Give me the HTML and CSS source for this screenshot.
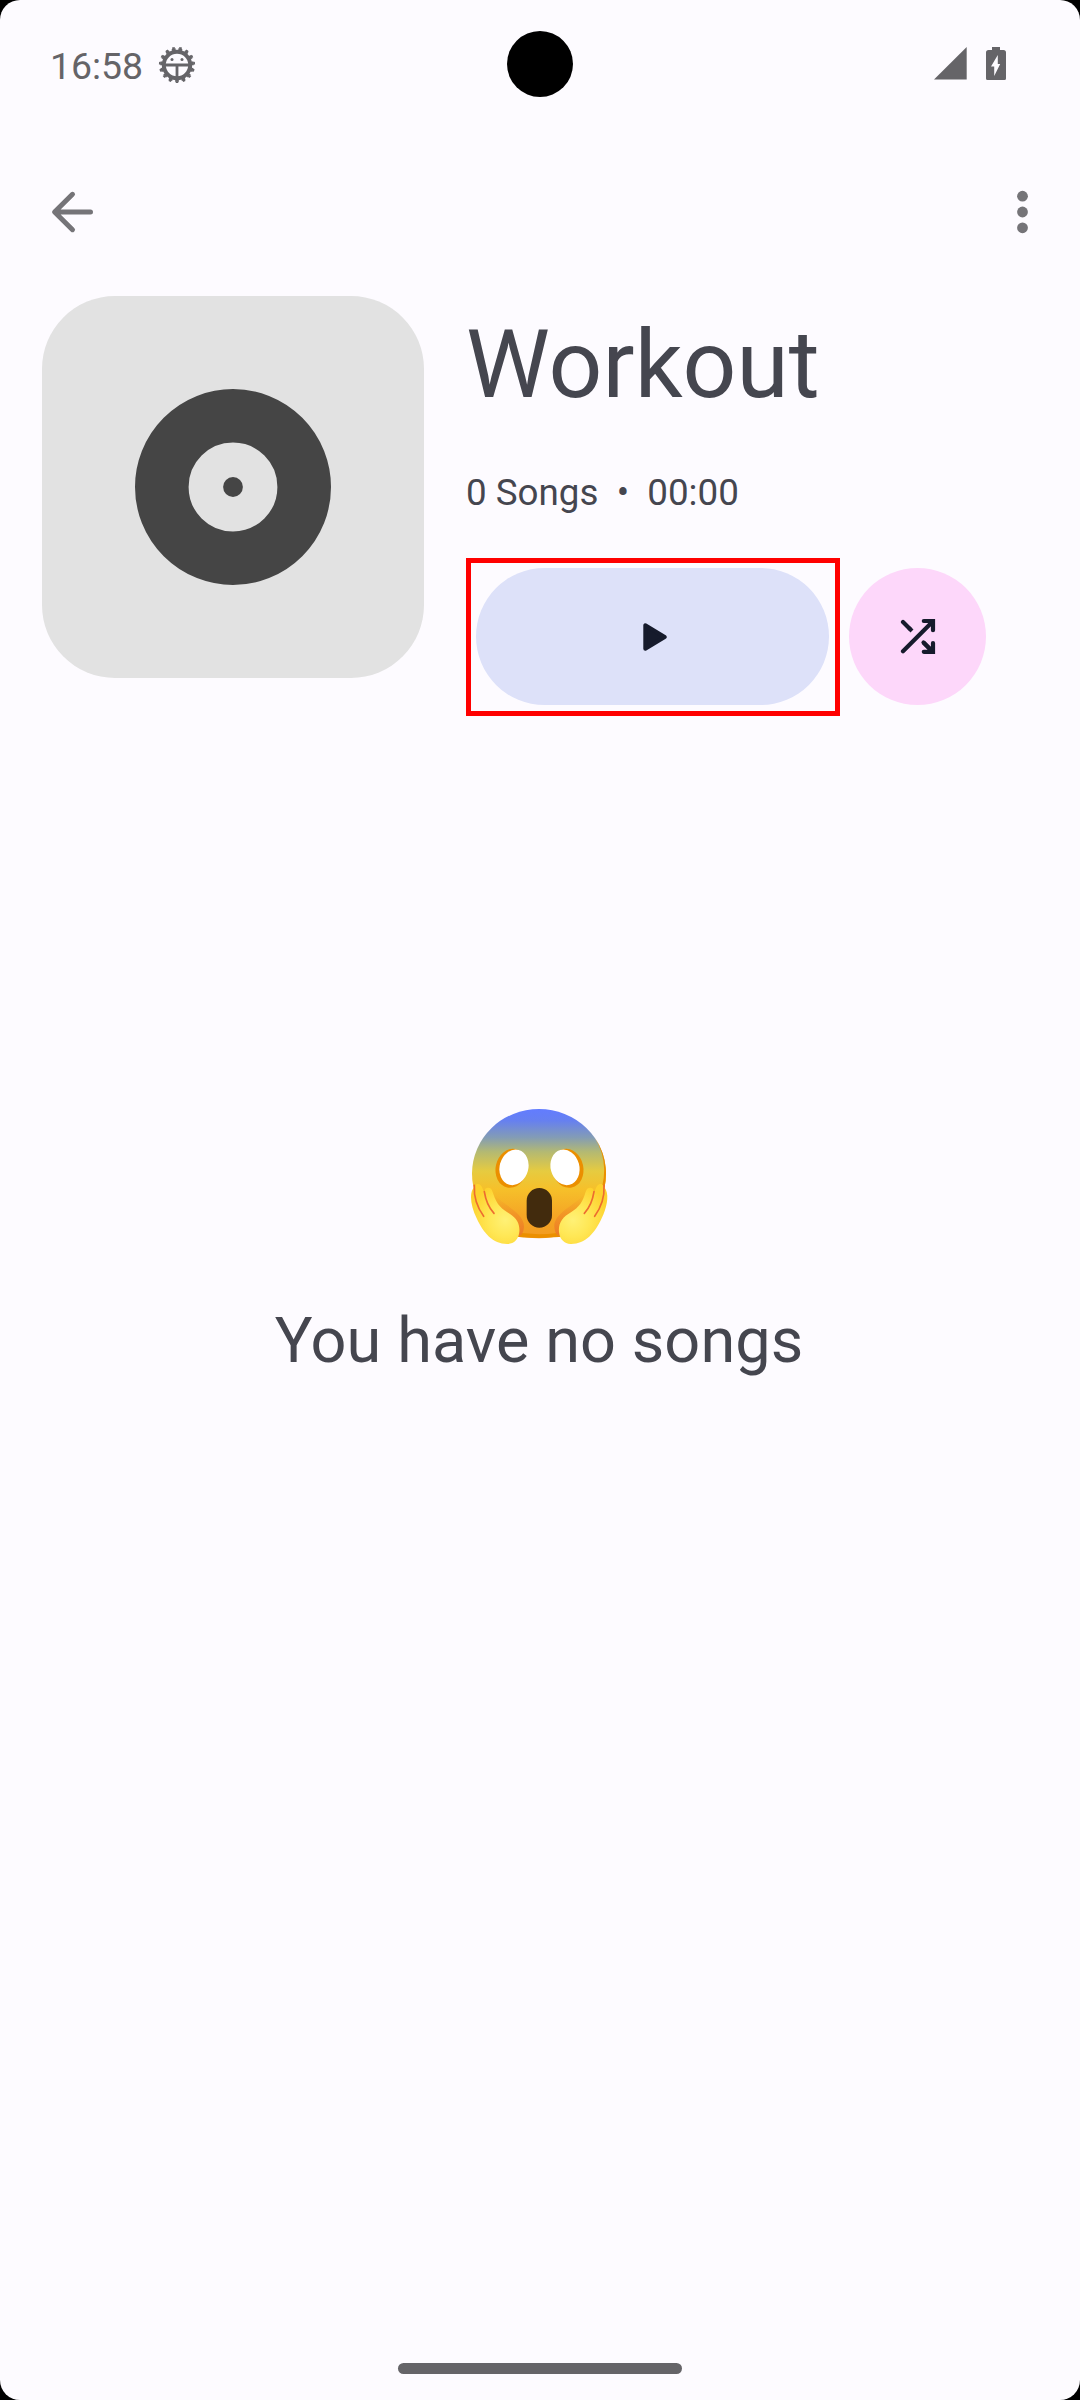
FILE: index.html
```html
<!DOCTYPE html>
<html lang="en">
<head>
<meta charset="utf-8">
<title>Workout</title>
<link rel="stylesheet" href="styles.css">
</head>
<body>
<div class="screen">
  <div class="camera"></div>
  <header class="status">
    <span class="clock">16:58</span>
    <svg class="debug" width="38" height="38" viewBox="-19 -19 38 38">
      <g fill="none" stroke="currentColor">
        <circle r="13.200" stroke-width="4"/>
        <circle r="15.700" stroke-width="2.200" pathLength="15" stroke-dasharray=".58 .42" stroke-dashoffset="-.46"/>
        <circle r="17.200" stroke-width="1.800" pathLength="15" stroke-dasharray=".36 .64" stroke-dashoffset="-.57"/>
        <path d="M-12 0H12M0 0V13" stroke-width="2.800"/>
      </g>
      <circle cx="-5" cy="-5.600" r="1.500" fill="currentColor"/>
      <circle cx="5" cy="-5.600" r="1.500" fill="currentColor"/>
    </svg>
    <svg class="signal" width="33" height="33" viewBox="0 0 33 33"><path d="M0 32.5L32.7 0V32.5z" fill="currentColor"/></svg>
    <svg class="battery" width="20" height="33" viewBox="0 0 20 33">
      <path fill="currentColor" fill-rule="evenodd" d="M6 0H14V3H17.500Q20 3 20 5.500V31.500Q20 33 18.500 33H1.500Q0 33 0 31.500V5.500Q0 3 2.500 3H6zM11.800 8L5 19.600H8.200V29L14.200 17H11.800z"/>
    </svg>
  </header>
  <nav class="toolbar">
    <svg width="44" height="44" viewBox="0 0 44 44" fill="none" stroke="currentColor" stroke-width="5" stroke-linecap="round" stroke-linejoin="round"><path d="M22.500 4.300L4.600 22L22.500 39.700M5 22H40.500"/></svg>
    <svg width="12" height="44" viewBox="0 0 12 44" fill="currentColor"><circle cx="5.500" cy="6.200" r="5.400"/><circle cx="5.500" cy="22" r="5.400"/><circle cx="5.500" cy="37.800" r="5.400"/></svg>
  </nav>
  <section class="album">
    <div class="cover">
      <svg width="196" height="196" viewBox="-98 -98 196 196"><circle r="71.200" fill="none" stroke="#454545" stroke-width="53.600"/><circle r="9.900" fill="#454545"/></svg>
    </div>
    <div class="info">
      <h1 class="title">Workout</h1>
      <p class="meta">0 Songs  •  00:00</p>
      <div class="actions">
        <div class="focus">
          <button class="play" aria-label="Play"><svg width="24" height="28" viewBox="0 0 24 28"><path d="M2.300 2.300V25.700L21.700 14z" fill="#161b2c" stroke="#161b2c" stroke-width="4" stroke-linejoin="round"/></svg></button>
        </div>
        <button class="shuffle" aria-label="Shuffle">
          <svg width="36" height="36" viewBox="0 0 36 36" fill="none" stroke="#161b2c" stroke-width="4.200" stroke-linecap="round"><path d="M3 33.300L32 4.300M3 4L9.500 10.500"/><path d="M9 10L12 13M23.500 24.500L31 32" stroke-linecap="butt"/><path d="M23.800 3H33V12.200M33 25V33.800H23.800M23.500 24.500L31 32"/></svg>
        </button>
      </div>
    </div>
  </section>
  <main class="empty">
    <svg class="scream" width="140" height="140" viewBox="90 51 420 420" role="img" aria-label="Screaming face">
      <defs>
        <linearGradient id="skin" x1="0" y1="0" x2="0" y2="1">
          <stop offset="0" stop-color="#627cff"/><stop offset=".09" stop-color="#6680f0"/><stop offset=".22" stop-color="#839cb5"/><stop offset=".33" stop-color="#b3b973"/><stop offset=".48" stop-color="#e6cb40"/><stop offset=".62" stop-color="#f6c02a"/><stop offset=".82" stop-color="#f5a625"/><stop offset="1" stop-color="#f29a20"/>
        </linearGradient>
        <radialGradient id="hand" gradientUnits="userSpaceOnUse" cx="196" cy="390" r="110">
          <stop offset="0" stop-color="#fff176"/><stop offset=".45" stop-color="#ffe755"/><stop offset="1" stop-color="#fdd12d"/>
        </radialGradient>
        <linearGradient id="shade" x1="0" y1="0" x2="0" y2="1"><stop offset="0" stop-color="#ef8a28" stop-opacity="0"/><stop offset="1" stop-color="#ed7a26"/></linearGradient>
        <g id="side">
          <path d="M165 315C190 345 254 370 252 410C251 428 244 438 234 438L170 400z" fill="url(#shade)"/>
          <path d="M104 288C110 278 122 281 126 292L137 318C131 303 134 293 144 293C153 292 157 301 160 312C170 345 187 358 209 371C232 385 240 404 238 426C236 448 222 461 203 462C160 463 130 430 110 385C95 354 88 320 97 300z" fill="url(#hand)"/>
          <path d="M103 286C101 320 111 351 131 379M133 305C137 331 146 353 162 370" fill="none" stroke="#ed6c30" stroke-width="5" stroke-linecap="round"/>
        </g>
      </defs>
      <ellipse cx="297" cy="251" rx="201" ry="194" fill="url(#skin)"/>
      <path d="M465 144A201 194 0 0 1 480 331L470 331A201 194 0 0 0 465 144z" fill="#eb8f00"/>
      <path d="M190 420Q297 445 405 420V435Q297 453 190 435z" fill="#eb8f00"/>
      <ellipse cx="214" cy="235" rx="47" ry="59" transform="rotate(12 214 235)" fill="#eb8f00"/>
      <ellipse cx="383" cy="235" rx="47" ry="59" transform="rotate(-12 383 235)" fill="#eb8f00"/>
      <ellipse cx="222" cy="232" rx="43" ry="54" transform="rotate(15 222 232)" fill="#fff"/>
      <ellipse cx="375" cy="232" rx="43" ry="54" transform="rotate(-15 375 232)" fill="#fff"/>
      <rect x="260" y="294" width="76" height="119" rx="38" fill="#422b0d"/>
      <use href="#side"/>
      <use href="#side" transform="translate(595 0) scale(-1 1)"/>
    </svg>
    <p class="message">You have no songs</p>
  </main>
  <footer class="navigation"><div class="handle"></div></footer>
</div>
</body>
</html>
```
FILE: styles.css
```css
* { box-sizing: border-box; }
body { margin: 0; background: #000; font-family: Roboto, sans-serif; color: #45464f; }
h1, p { margin: 0; font-weight: 400; }
svg { display: block; flex: none; }
button { border: 0; padding: 0; display: flex; align-items: center; justify-content: center; }
.screen { position: relative; width: 1080px; height: 2400px; background: #fdfbff; border-radius: 20px; overflow: hidden; display: flex; flex-direction: column; }
.camera { position: absolute; left: 507px; top: 31px; width: 66px; height: 66px; border-radius: 50%; background: #000; }
.status { height: 128px; padding: 0 74px 0 50px; display: flex; align-items: center; color: #656468; }
.clock { width: 92px; font-size: 37.400px; line-height: 44px; padding-top: 3px; }
.debug { margin-left: 16px; margin-top: 2px; }
.signal { margin-left: auto; margin-bottom: 1px; }
.battery { margin-left: 19px; margin-bottom: 1px; }
.toolbar { height: 168px; padding: 0 51px 1px 50px; display: flex; align-items: center; justify-content: space-between; color: #757478; }
.album { height: 420px; padding-left: 42px; display: flex; align-items: flex-start; gap: 42px; }
.cover { width: 382px; height: 382px; border-radius: 73px; background: #e2e2e2; display: flex; align-items: center; justify-content: center; }
.title { font-size: 94.500px; line-height: 116px; padding-top: 11px; letter-spacing: .100px; }
.meta { font-size: 36.750px; line-height: 52px; margin-top: 44px; white-space: pre; }
.actions { display: flex; align-items: flex-start; gap: 9px; margin-top: 39px; }
.focus { width: 374px; height: 158px; padding: 5px 6px 6px 5px; border: 5px solid #f00; }
.play { width: 353px; height: 137px; border-radius: 69px; background: #dde1f9; }
.play svg { margin-left: 5px; }
.shuffle { width: 137px; height: 137px; margin-top: 10px; border-radius: 50%; background: #fdd7fa; }
.shuffle svg { margin-bottom: 1px; }
.empty { flex: 1; padding-top: 391px; display: flex; flex-direction: column; align-items: center; }
.message { font-size: 63px; line-height: 84px; margin-top: 52px; margin-right: 2px; letter-spacing: .080px; }
.navigation { height: 63px; display: flex; align-items: center; justify-content: center; }
.handle { width: 284px; height: 11px; border-radius: 6px; background: #656468; }
```
